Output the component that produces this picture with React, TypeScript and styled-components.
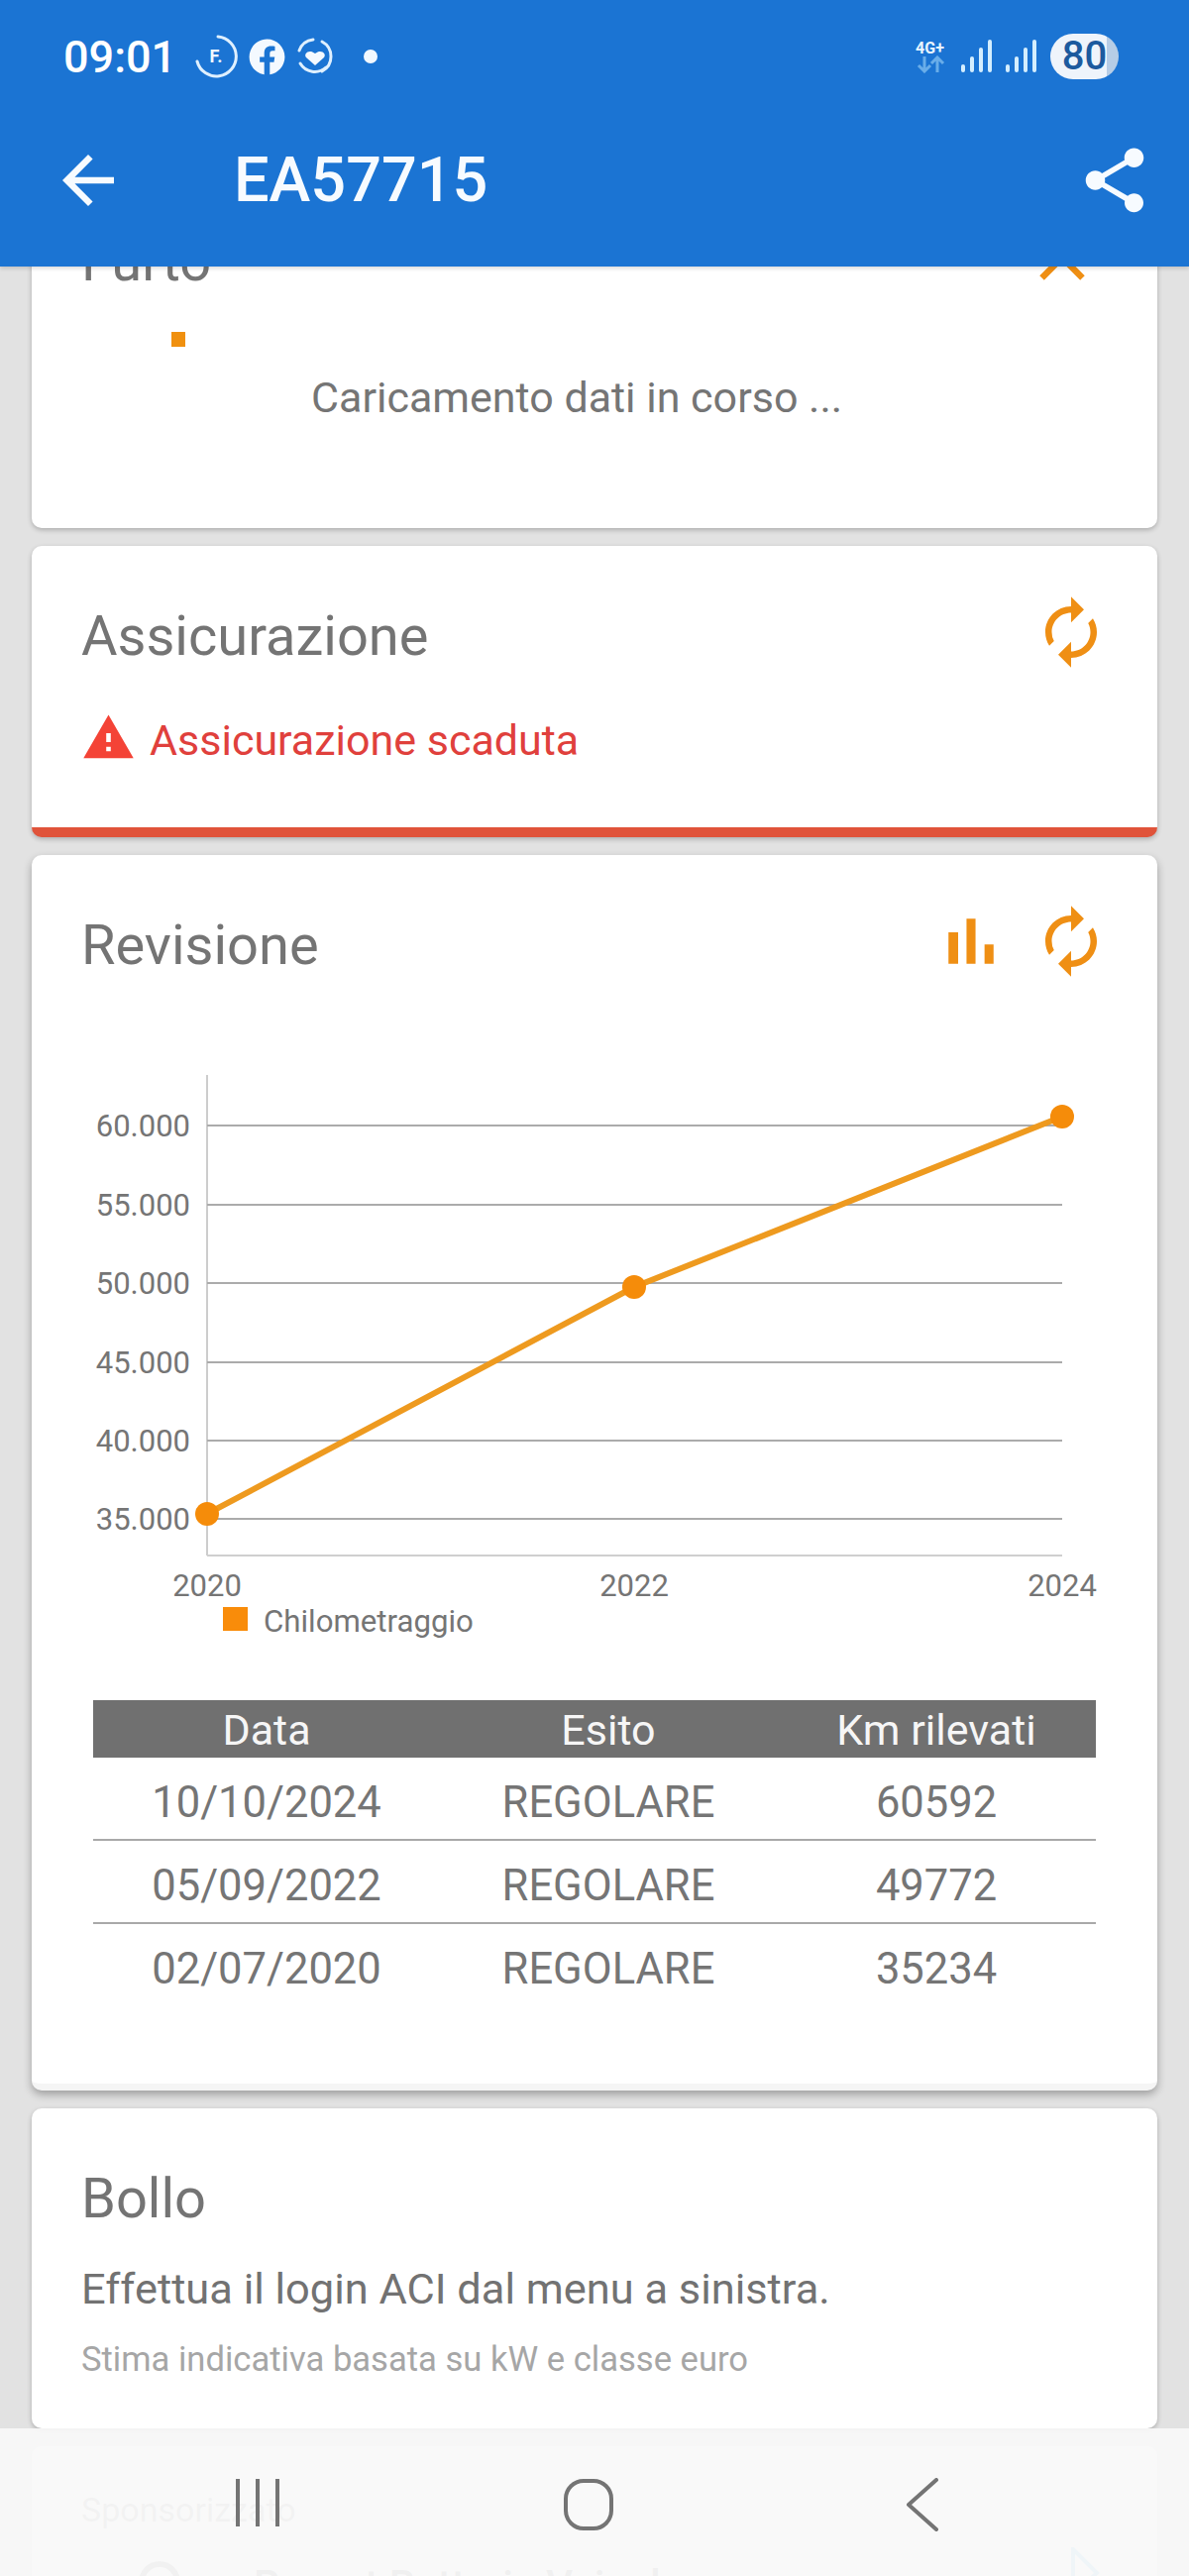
import React from 'react';
import styled, { createGlobalStyle } from 'styled-components';
import { FaFacebook } from 'react-icons/fa';
import { MdArrowBack, MdAutorenew, MdClose, MdShare, MdWarning } from 'react-icons/md';

const GlobalStyle = createGlobalStyle`
  html, body { margin: 0; padding: 0; }
  body { font-family: Roboto, "Liberation Sans", sans-serif; background: #e2e2e2; }
`;

const Page = styled.div`
  position: relative;
  width: 1200px;
  height: 2600px;
  overflow: hidden;
  background: #e2e2e2;
`;

const Header = styled.header`
  position: absolute;
  top: 0;
  left: 0;
  right: 0;
  height: 269px;
  background: #1b74d3;
  box-shadow: 0 2px 4px rgba(0, 0, 0, 0.15);
  z-index: 2;
  color: #fff;
`;

const StatusBar = styled.div`
  display: flex;
  align-items: center;
  height: 114px;
  padding: 0 71px 0 64px;
`;

const Time = styled.span`
  font-size: 45px;
  font-weight: 500;
  margin-right: 18px;
`;

const StatusIcons = styled.div`
  display: flex;
  align-items: center;
  gap: 11px;
  flex: 1;
`;

const Dot = styled.span`
  width: 14px;
  height: 14px;
  margin-left: 19px;
  border-radius: 50%;
  background: #f2f8ff;
`;

const NetworkBlock = styled.div`
  display: flex;
  flex-direction: column;
  align-items: center;
  width: 37px;
  margin-right: 13px;
`;

const NetworkLabel = styled.span`
  font-size: 16px;
  font-weight: 700;
  line-height: 15px;
  color: #e8f5ff;
`;

const Signal = styled.svg`
  margin-right: 13px;
`;

const Battery = styled.span`
  width: 69px;
  height: 46px;
  border-radius: 23px;
  background: linear-gradient(90deg, #eef4fb 0 83%, #b6cde6 83%);
  color: #1c5a9e;
  font-size: 40px;
  font-weight: 500;
  line-height: 46px;
  text-align: center;
`;

const AppBar = styled.div`
  display: flex;
  align-items: center;
  height: 78px;
  margin-top: 29px;
  padding: 0 36px 0 50px;
`;

const PlateTitle = styled.h1`
  flex: 1;
  margin: 0 0 0 108px;
  font-size: 63px;
  font-weight: 500;
  line-height: 78px;
  color: #f7fbff;
`;

const Content = styled.main`
  display: flex;
  flex-direction: column;
  gap: 18px;
  padding: 173px 32px 0;
`;

const Card = styled.section<{ $accent?: string; $height: number }>`
  box-sizing: border-box;
  height: ${props => props.$height}px;
  padding: 48px 48px 0 50px;
  background: #fff;
  border-radius: 10px;
  border-bottom: ${props => (props.$accent ? `10px solid ${props.$accent}` : 'none')};
  box-shadow: 0 2px 5px rgba(0, 0, 0, 0.24);
  flex: none;
`;

const ChartCard = styled(Card)`
  padding-left: 0;
  padding-right: 0;
  border-bottom: 7px solid #f5f5f5;
  box-shadow: 0 4px 8px rgba(0, 0, 0, 0.3);
`;

const CardHead = styled.div<{ $inset?: boolean }>`
  display: flex;
  align-items: center;
  gap: 23px;
  height: 78px;
  padding: ${props => (props.$inset ? '0 48px 0 50px' : '0')};
  color: #ef8f14;
`;

const CardTitle = styled.h2`
  flex: 1;
  margin: 0;
  padding-top: 8px;
  font-size: 56px;
  font-weight: 400;
  color: #747474;
`;

const CloseSlot = styled.span`
  display: flex;
  margin-right: 9px;
`;

const LoadingRow = styled.div`
  display: flex;
  align-items: flex-start;
  margin-top: 36px;
  padding-left: 91px;
`;

const LoaderSquare = styled.span`
  width: 14px;
  height: 15px;
  background: #f0900f;
`;

const LoadingText = styled.span`
  margin: 41px 0 0 127px;
  font-size: 43px;
  line-height: 50px;
  color: #757575;
`;

const AlertRow = styled.div`
  display: flex;
  align-items: center;
  gap: 14px;
  height: 55px;
  margin-top: 40px;
  color: #f44336;
`;

const AlertText = styled.span`
  padding-top: 4px;
  font-size: 43px;
  color: #e0403c;
`;

const ChartFrame = styled.svg`
  display: block;
  margin-top: 96px;
`;

const KmTable = styled.div`
  margin: 56px 62px 0;
`;

const TableHead = styled.div`
  display: grid;
  grid-template-columns: 350px 340px 1fr;
  height: 58px;
  background: #707070;
  color: #f6f6f6;
  font-size: 43px;
  line-height: 60px;
  text-align: center;
`;

const TableRow = styled.div`
  display: grid;
  grid-template-columns: 350px 340px 1fr;
  box-sizing: border-box;
  height: 84px;
  border-bottom: 2px solid #a9a9a9;
  color: #757575;
  font-size: 43.5px;
  line-height: 92px;
  text-align: center;

  &:last-child {
    border-bottom: none;
  }
`;

const BolloText = styled.p`
  margin: 32px 0 0;
  font-size: 43.4px;
  line-height: 50px;
  color: #727272;
`;

const BolloNote = styled.p`
  margin: 25px 0 0;
  font-size: 34.6px;
  line-height: 40px;
  color: #a6a6a6;
`;

const AdCard = styled.section`
  box-sizing: border-box;
  height: 200px;
  padding: 44px 48px 0 50px;
  background: #fff;
  border-radius: 10px;
  flex: none;
`;

const AdLabel = styled.div`
  font-size: 34px;
  line-height: 40px;
  color: #a8a8a8;
`;

const AdRow = styled.div`
  display: flex;
  align-items: flex-start;
  gap: 74px;
  margin-top: 32px;
  padding-left: 58px;
  color: #8a8a8a;
`;

const AdCircle = styled.span`
  width: 30px;
  height: 30px;
  border: 6px solid #9a9a9a;
  border-radius: 50%;
  flex: none;
`;

const AdText = styled.span`
  flex: 1;
  font-size: 42px;
  line-height: 50px;
  font-weight: 500;
`;

const AdMark = styled.svg`
  margin-top: -14px;
  margin-right: 10px;
`;

const NavBar = styled.nav`
  position: absolute;
  left: 0;
  right: 0;
  bottom: 0;
  display: grid;
  grid-template-columns: 334px 334px 340px;
  justify-items: center;
  box-sizing: border-box;
  height: 149px;
  padding: 50px 0 0 93px;
  background: rgba(248, 248, 248, 0.92);
  z-index: 1;
`;

const gridLines = [
  { y: 1136, label: '60.000' },
  { y: 1216, label: '55.000' },
  { y: 1295, label: '50.000' },
  { y: 1375, label: '45.000' },
  { y: 1454, label: '40.000' },
  { y: 1533, label: '35.000' },
];

const points = [
  { x: 209, y: 1528, label: '2020' },
  { x: 640, y: 1299, label: '2022' },
  { x: 1072, y: 1127, label: '2024' },
];

const rows = [
  { date: '10/10/2024', result: 'REGOLARE', km: '60592' },
  { date: '05/09/2022', result: 'REGOLARE', km: '49772' },
  { date: '02/07/2020', result: 'REGOLARE', km: '35234' },
];

const SignalBars = () => (
  <Signal width="32" height="34" viewBox="0 0 32 34">
    <g fill="#d4eeff">
      <rect x="0" y="25" width="4" height="8" rx="2" />
      <rect x="9" y="17" width="4" height="16" rx="2" />
      <rect x="18" y="8" width="4" height="25" rx="2" />
      <rect x="27" y="0" width="4" height="33" rx="2" />
    </g>
  </Signal>
);

const BarsIcon = () => (
  <svg width="78" height="78" viewBox="0 0 24 24" fill="currentColor">
    <path d="M5 9.2h3V19H5zM10.6 5h2.8v14h-2.8zm5.6 8H19v6h-2.8z" />
  </svg>
);

const Chart = () => (
  <ChartFrame width="1136" height="575" viewBox="32 1085 1136 575">
    <line x1="209" y1="1085" x2="209" y2="1570" stroke="#bdbdbd" strokeWidth="1.5" />
    <line x1="209" y1="1570" x2="1072" y2="1570" stroke="#cfcfcf" strokeWidth="2" />
    {gridLines.map(line => (
      <g key={line.label}>
        <line x1="209" y1={line.y} x2="1072" y2={line.y} stroke="#ababab" strokeWidth="2" />
        <text x="192" y={line.y + 11} textAnchor="end" fontSize="31" fill="#757575" fontFamily="Roboto, sans-serif">
          {line.label}
        </text>
      </g>
    ))}
    <polyline
      points={points.map(p => `${p.x},${p.y}`).join(' ')}
      fill="none"
      stroke="#ee9a1f"
      strokeWidth="6"
    />
    {points.map(p => (
      <g key={p.label}>
        <circle cx={p.x} cy={p.y} r="12" fill="#f58c0a" />
        <text x={p.x} y="1611" textAnchor="middle" fontSize="31" fill="#757575" fontFamily="Roboto, sans-serif">
          {p.label}
        </text>
      </g>
    ))}
    <rect x="225" y="1622" width="25" height="24" fill="#f98c0a" />
    <text x="266" y="1647" fontSize="31.2" fill="#757575" fontFamily="Roboto, sans-serif">
      Chilometraggio
    </text>
  </ChartFrame>
);

export default function App() {
  return (
    <Page>
      <GlobalStyle />
      <Header>
        <StatusBar>
          <Time>09:01</Time>
          <StatusIcons>
            <svg width="44" height="44" viewBox="0 0 44 44">
              <path d="M24 2a20 20 0 1 1-21 25" fill="none" stroke="#dff0ff" strokeWidth="3" strokeLinecap="round" />
              <text x="22" y="28" textAnchor="middle" fontSize="18" fontWeight="700" fill="#f2f8ff" fontFamily="Roboto, sans-serif">
                F.
              </text>
            </svg>
            <FaFacebook size={37} color="#f4f9ff" />
            <svg width="38" height="38" viewBox="0 0 38 38">
              <path d="M26 4a17 17 0 0 1 0 30M30 30a17 17 0 0 1-26-4M3 13A17 17 0 0 1 17 2" fill="none" stroke="#dff0ff" strokeWidth="3" strokeLinecap="round" />
              <path d="M19 28l-9-8c-3-4 3-9 9-4 6-5 12 0 9 4z" fill="#f4f9ff" />
            </svg>
            <Dot />
          </StatusIcons>
          <NetworkBlock>
            <NetworkLabel>4G+</NetworkLabel>
            <svg width="30" height="18" viewBox="0 0 30 18">
              <path d="M9 1v14M3 10l6 6 6-6M22 17V3M16 8l6-6 6 6" fill="none" stroke="#69ade9" strokeWidth="3" />
            </svg>
          </NetworkBlock>
          <SignalBars />
          <SignalBars />
          <Battery>80</Battery>
        </StatusBar>
        <AppBar>
          <MdArrowBack size={78} color="#f7fbff" />
          <PlateTitle>EA57715</PlateTitle>
          <MdShare size={78} color="#f7fbff" />
        </AppBar>
      </Header>

      <Content>
        <Card $height={360}>
          <CardHead>
            <CardTitle>Furto</CardTitle>
            <CloseSlot>
              <MdClose size={78} />
            </CloseSlot>
          </CardHead>
          <LoadingRow>
            <LoaderSquare />
            <LoadingText>Caricamento dati in corso ...</LoadingText>
          </LoadingRow>
        </Card>

        <Card $height={294} $accent="#e0533a">
          <CardHead>
            <CardTitle>Assicurazione</CardTitle>
            <MdAutorenew size={78} />
          </CardHead>
          <AlertRow>
            <MdWarning size={55} />
            <AlertText>Assicurazione scaduta</AlertText>
          </AlertRow>
        </Card>

        <ChartCard $height={1247}>
          <CardHead $inset>
            <CardTitle>Revisione</CardTitle>
            <BarsIcon />
            <MdAutorenew size={78} />
          </CardHead>
          <Chart />
          <KmTable>
            <TableHead>
              <span>Data</span>
              <span>Esito</span>
              <span>Km rilevati</span>
            </TableHead>
            {rows.map(row => (
              <TableRow key={row.date}>
                <span>{row.date}</span>
                <span>{row.result}</span>
                <span>{row.km}</span>
              </TableRow>
            ))}
          </KmTable>
        </ChartCard>

        <Card $height={323}>
          <CardHead>
            <CardTitle>Bollo</CardTitle>
          </CardHead>
          <BolloText>Effettua il login ACI dal menu a sinistra.</BolloText>
          <BolloNote>Stima indicativa basata su kW e classe euro</BolloNote>
        </Card>

        <AdCard>
          <AdLabel>Sponsorizzato</AdLabel>
          <AdRow>
            <AdCircle />
            <AdText>Report Batteria Veicolo</AdText>
            <AdMark width="30" height="50" viewBox="0 0 30 50">
              <path d="M3 2l24 24L3 48z" fill="none" stroke="#7fc4e8" strokeWidth="4" />
            </AdMark>
          </AdRow>
        </AdCard>
      </Content>

      <NavBar>
        <svg width="46" height="50" viewBox="0 0 46 50">
          <path d="M3 1v48M23 1v48M43 1v48" stroke="#747474" strokeWidth="4" />
        </svg>
        <svg width="52" height="54" viewBox="0 0 52 54">
          <rect x="3" y="3" width="46" height="48" rx="18" fill="none" stroke="#747474" strokeWidth="4" />
        </svg>
        <svg width="34" height="54" viewBox="0 0 34 54">
          <path d="M31 2L3 27l28 25" fill="none" stroke="#747474" strokeWidth="4" strokeLinecap="round" strokeLinejoin="round" />
        </svg>
      </NavBar>
    </Page>
  );
}
